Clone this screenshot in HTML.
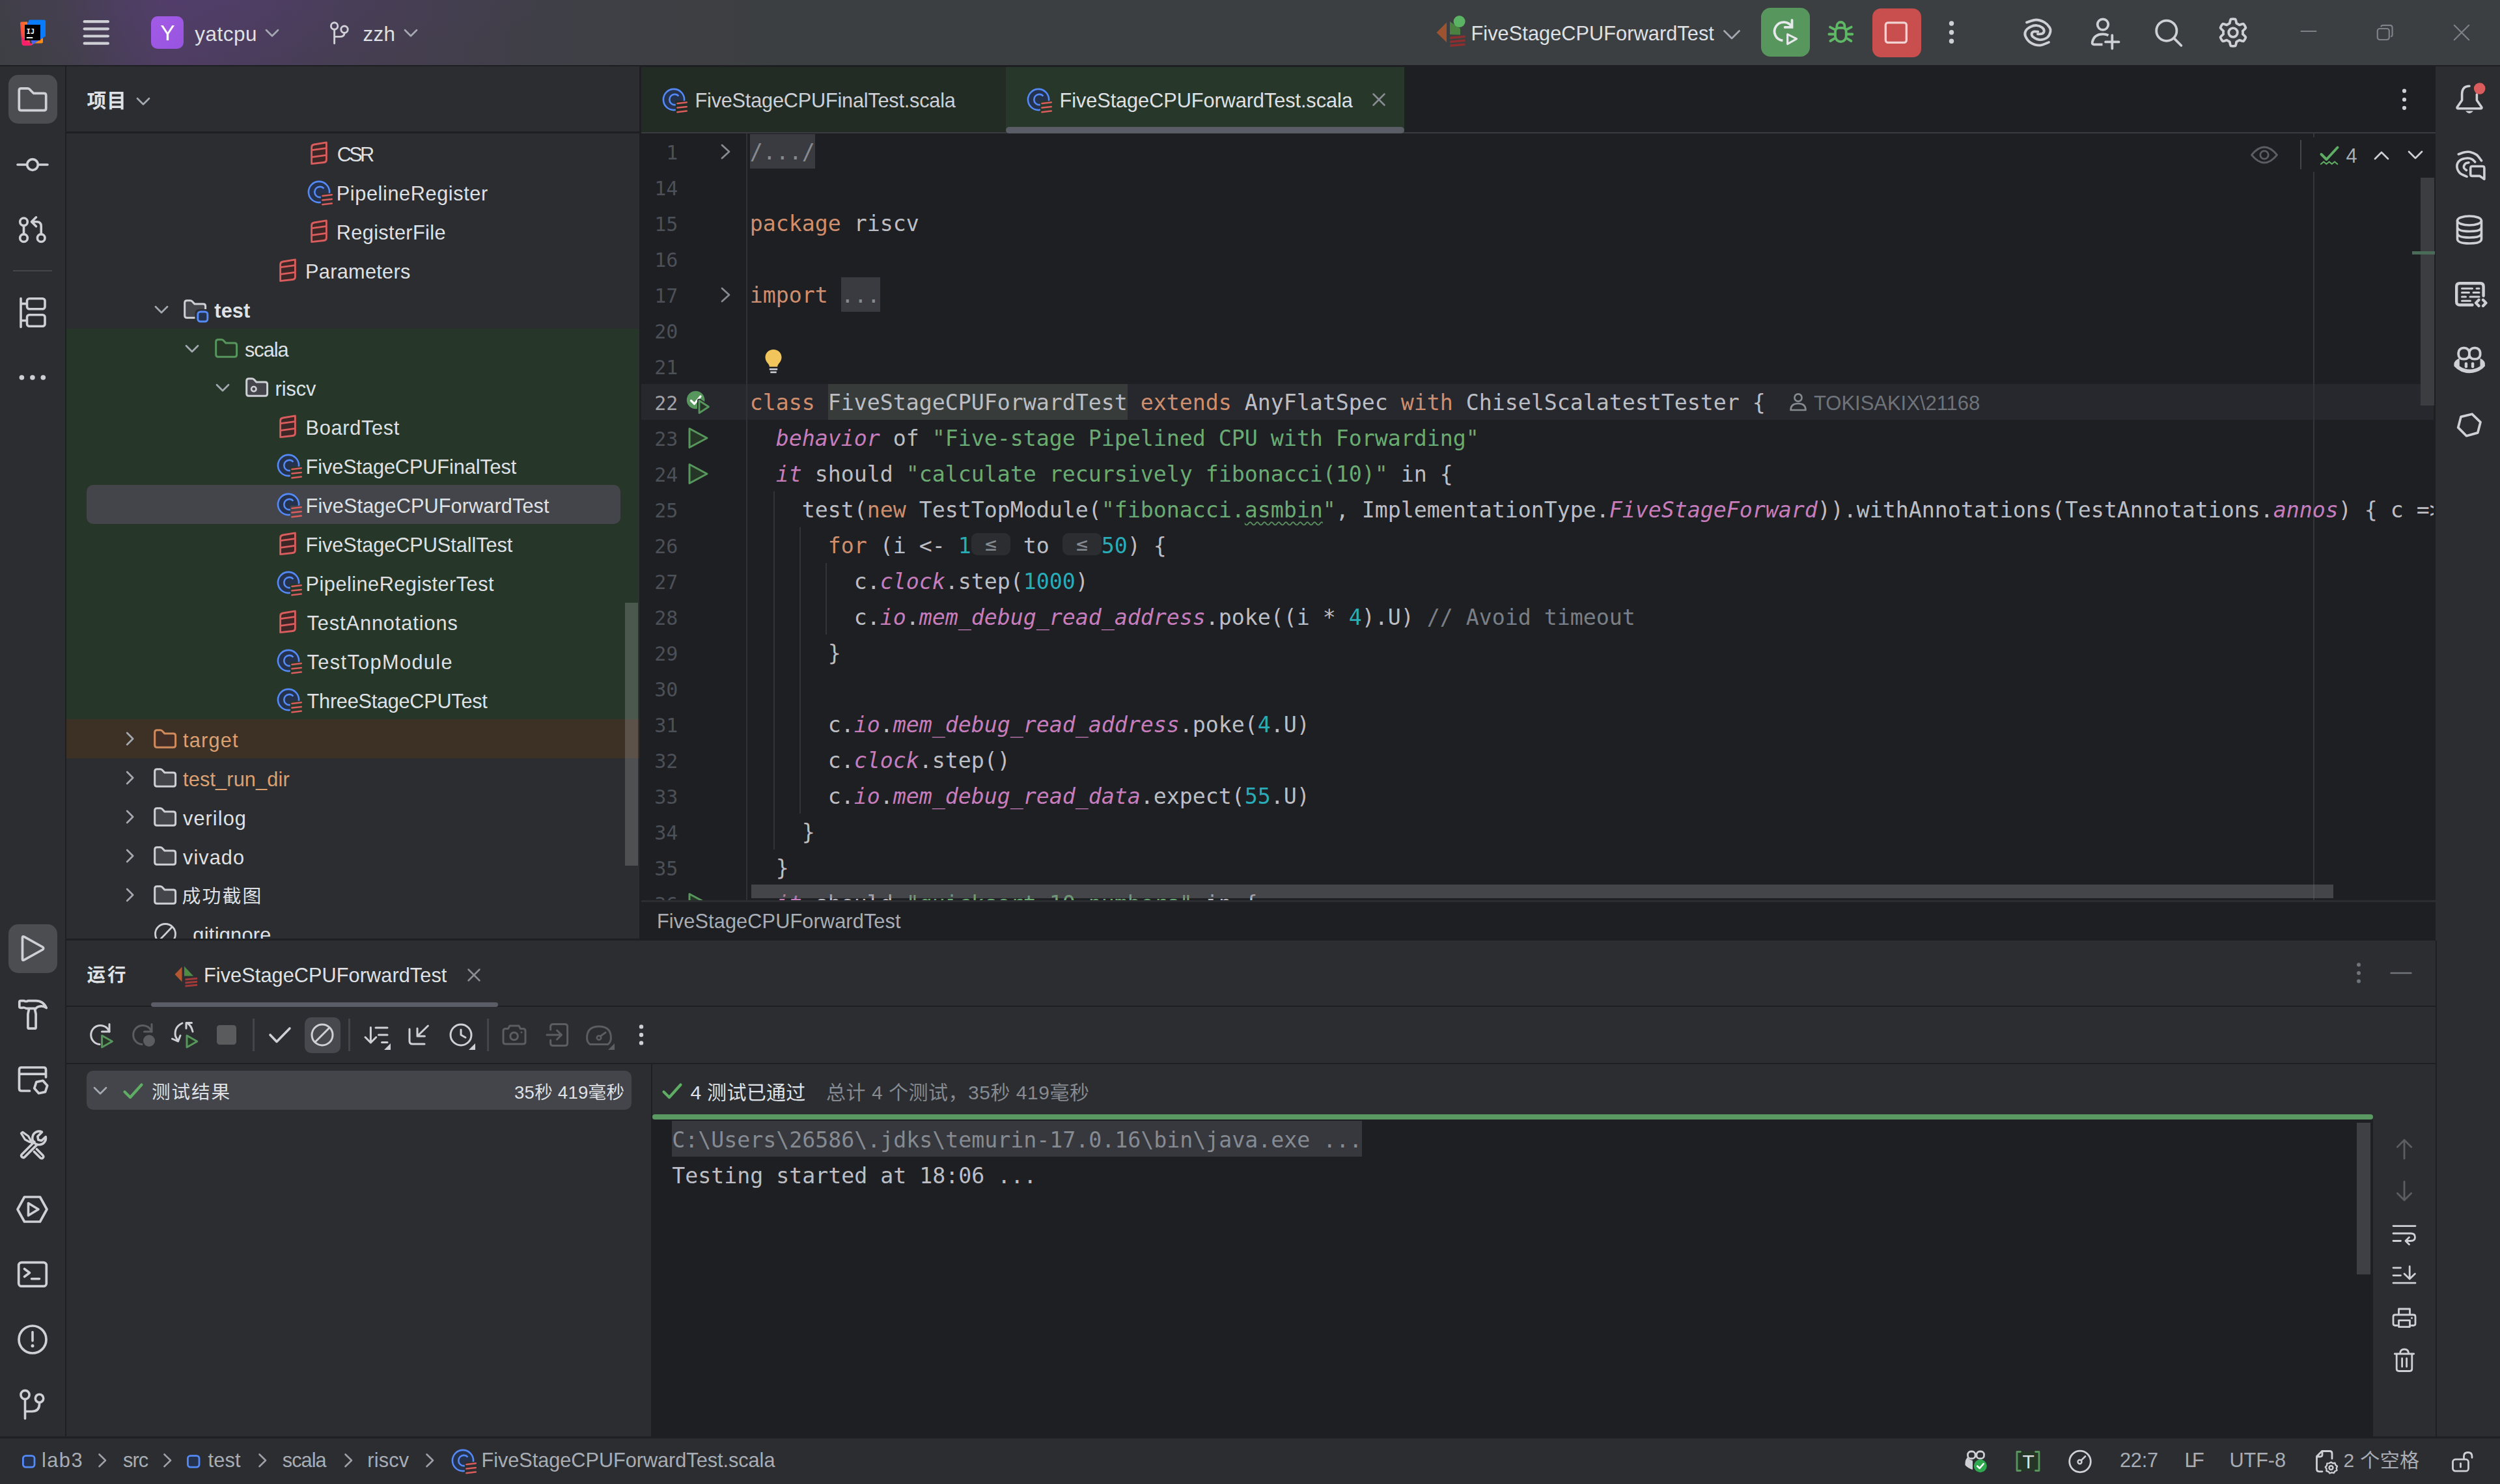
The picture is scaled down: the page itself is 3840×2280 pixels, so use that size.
<!DOCTYPE html>
<html lang="zh-CN"><head><meta charset="utf-8"><title>yatcpu – FiveStageCPUForwardTest.scala</title>
<style>
html,body{margin:0;padding:0;background:#2B2D30;overflow:hidden}
body{width:3840px;height:2280px;position:relative;font-family:"Liberation Sans","Noto Sans CJK SC",sans-serif;color:#DFE1E5}
.a{position:absolute;display:block}
.t{position:absolute;white-space:pre;line-height:1;display:block}
.p{display:inline-block;width:0;height:0}
.cl{position:absolute;white-space:pre;left:1153px;height:55px;line-height:55px;font-family:"DejaVu Sans Mono","Liberation Mono","Noto Sans CJK SC",monospace;font-size:33.22px;color:#BCBEC4}
.k{color:#CF8E6D}.s{color:#6AAB73}.n{color:#2AACB8}.c{color:#7A7E85}.f{color:#C77DBB;font-style:italic}
.fold{background:#393B40;color:#868A91}
.idh{background:#373B39}
.typo{text-decoration:underline wavy #5A8E5F 2px;text-underline-offset:6px}
.hint{display:inline-block;width:60px;height:34px;line-height:34px;vertical-align:3.6px;text-align:center;background:#2B2D30;border-radius:9px;color:#868A91;font-size:30px;letter-spacing:0}
.c2{color:#868A91}
.ln{position:absolute;white-space:pre;left:0;width:56.3px;text-align:right;height:55px;line-height:55px;margin-top:1.1px;font-family:"DejaVu Sans Mono","Liberation Mono",monospace;font-size:30px;color:#4B5059}
</style></head>
<body>
<main id="ide-window">
<section id="window-frame" aria-label="panels"><div class="a" id="titlebar" style="left:0;top:0;width:3840px;height:100px;background:radial-gradient(ellipse 560px 95px at 330px 0px,rgba(100,64,146,0.16) 0%,rgba(100,64,146,0.06) 60%,rgba(100,64,146,0) 100%),linear-gradient(90deg,#3E3F44 0px,#423F4A 100px,#4A3E5B 190px,#4F3D63 260px,#4D3D60 330px,#4A3D5B 410px,#463E53 520px,#443E4E 640px,#403F48 800px,#3E3F44 1000px,#3C3F41 1200px);"></div><div class="a" style="left:0px;top:100px;width:3840px;height:3px;background:#1E1F22;"></div><div class="a" style="left:0px;top:102px;width:100px;height:2105px;background:#2B2D30;"></div><div class="a" style="left:100px;top:102px;width:2px;height:2105px;background:#1E1F22;"></div><div class="a" style="left:102px;top:102px;width:880px;height:1340px;background:#2B2D30;"></div><div class="a" style="left:102px;top:202px;width:880px;height:3px;background:#1E1F22;"></div><div class="a" style="left:102px;top:505px;width:880px;height:600px;background:#263729;"></div><div class="a" style="left:102px;top:1105px;width:880px;height:60px;background:#3D3025;"></div><div class="a" style="left:133px;top:745px;width:820px;height:60px;background:#43454A;border-radius:10px;"></div><div class="a" style="left:960px;top:926px;width:20px;height:404px;background:rgba(255,255,255,0.17);"></div><div class="a" style="left:982px;top:102px;width:3px;height:1343px;background:#1E1F22;"></div><div class="a" style="left:985px;top:102px;width:2756px;height:1340px;background:#1E1F22;"></div><div class="a" style="left:985px;top:103px;width:560px;height:100px;background:#222C25;"></div><div class="a" style="left:1545px;top:103px;width:612px;height:100px;background:#27372A;"></div><div class="a" style="left:985px;top:203px;width:2756px;height:2px;background:#393B40;"></div><div class="a" style="left:1545px;top:195px;width:612px;height:10px;background:#5A5D65;border-radius:5px"></div><div class="a" style="left:3741px;top:102px;width:99px;height:2105px;background:#2B2D30;"></div><div class="a" style="left:102px;top:1442px;width:3639px;height:3px;background:#1E1F22;"></div><div class="a" style="left:102px;top:1445px;width:3639px;height:762px;background:#2B2D30;"></div><div class="a" style="left:3741px;top:1445px;width:2.4px;height:762px;background:#1E1F22;"></div><div class="a" style="left:102px;top:1545px;width:3639px;height:2px;background:#1E1F22;"></div><div class="a" style="left:102px;top:1633px;width:3639px;height:2px;background:#1E1F22;"></div><div class="a" style="left:232px;top:1540px;width:533px;height:7px;background:#5A5D65;border-radius:4px"></div><div class="a" style="left:133px;top:1645px;width:837px;height:60px;background:#43454A;border-radius:10px;"></div><div class="a" style="left:1000px;top:1635px;width:2px;height:572px;background:#1E1F22;"></div><div class="a" style="left:1000px;top:1720px;width:2645px;height:487px;background:#1E1F22;"></div><div class="a" style="left:1002px;top:1712px;width:2643px;height:8.4px;background:#5A9A62;border-radius:4px"></div><div class="a" style="left:1032px;top:1722px;width:1060px;height:55px;background:#36383D;"></div><div class="a" style="left:3620px;top:1725px;width:21px;height:233px;background:#3E4043;"></div><div class="a" style="left:0px;top:2207px;width:3840px;height:3px;background:#1E1F22;"></div><div class="a" style="left:0px;top:2210px;width:3840px;height:70px;background:#2B2D30;"></div></section>
<section id="editor-pane"><div class="a" id="editor" style="left:985px;top:205px;width:2753px;height:1178px;overflow:hidden"><div class="a" style="left:0px;top:385px;width:2753px;height:55px;background:#26282E;"></div><div class="a" style="left:287px;top:385px;width:460px;height:55px;background:#373B39;"></div><div class="a" style="left:167px;top:1px;width:100px;height:53px;background:#393B40;"></div><div class="a" style="left:307px;top:221px;width:60px;height:53px;background:#393B40;"></div><div class="a" style="left:160.5px;top:0px;width:2.5px;height:1178px;background:#2F3236;"></div><div class="a" style="left:2567.5px;top:0px;width:2.5px;height:1178px;background:#333539;"></div><div class="a" style="left:202.5px;top:550px;width:2.2px;height:550px;background:#313438;"></div><div class="a" style="left:242.5px;top:605px;width:2.2px;height:440px;background:#313438;"></div><div class="a" style="left:282.5px;top:660px;width:2.2px;height:110px;background:#313438;"></div><div class="ln" style="top:0.5px;color:#4B5059">1</div><div class="cl" style="left:166.79999999999995px;top:0.5px"><span class="c2">/.../</span></div><div class="ln" style="top:55.5px;color:#4B5059">14</div><div class="ln" style="top:110.5px;color:#4B5059">15</div><div class="cl" style="left:166.79999999999995px;top:110.5px"><span class="k">package</span> riscv</div><div class="ln" style="top:165.5px;color:#4B5059">16</div><div class="ln" style="top:220.5px;color:#4B5059">17</div><div class="cl" style="left:166.79999999999995px;top:220.5px"><span class="k">import</span> <span class="c2">...</span></div><div class="ln" style="top:275.5px;color:#4B5059">20</div><div class="ln" style="top:330.5px;color:#4B5059">21</div><div class="ln" style="top:385.5px;color:#A1A3AB">22</div><div class="cl" style="left:166.79999999999995px;top:385.5px"><span class="k">class</span> FiveStageCPUForwardTest <span class="k">extends</span> AnyFlatSpec <span class="k">with</span> ChiselScalatestTester {</div><div class="ln" style="top:440.5px;color:#4B5059">23</div><div class="cl" style="left:166.79999999999995px;top:440.5px">  <span class="f">behavior</span> of <span class="s">"Five-stage Pipelined CPU with Forwarding"</span></div><div class="ln" style="top:495.5px;color:#4B5059">24</div><div class="cl" style="left:166.79999999999995px;top:495.5px">  <span class="f">it</span> should <span class="s">"calculate recursively fibonacci(10)"</span> in {</div><div class="ln" style="top:550.5px;color:#4B5059">25</div><div class="cl" style="left:166.79999999999995px;top:550.5px">    test(<span class="k">new</span> TestTopModule(<span class="s">"fibonacci.<span class="typo">asmbin</span>"</span>, ImplementationType.<span class="f">FiveStageForward</span>)).withAnnotations(TestAnnotations.<span class="f">annos</span>) { c =&gt;</div><div class="ln" style="top:605.5px;color:#4B5059">26</div><div class="cl" style="left:166.79999999999995px;top:605.5px">      <span class="k">for</span> (i &lt;- <span class="n">1</span><span class="hint">≤</span> to <span class="hint">≤</span><span class="n">50</span>) {</div><div class="ln" style="top:660.5px;color:#4B5059">27</div><div class="cl" style="left:166.79999999999995px;top:660.5px">        c.<span class="f">clock</span>.step(<span class="n">1000</span>)</div><div class="ln" style="top:715.5px;color:#4B5059">28</div><div class="cl" style="left:166.79999999999995px;top:715.5px">        c.<span class="f">io</span>.<span class="f">mem_debug_read_address</span>.poke((i * <span class="n">4</span>).U) <span class="c">// Avoid timeout</span></div><div class="ln" style="top:770.5px;color:#4B5059">29</div><div class="cl" style="left:166.79999999999995px;top:770.5px">      }</div><div class="ln" style="top:825.5px;color:#4B5059">30</div><div class="ln" style="top:880.5px;color:#4B5059">31</div><div class="cl" style="left:166.79999999999995px;top:880.5px">      c.<span class="f">io</span>.<span class="f">mem_debug_read_address</span>.poke(<span class="n">4</span>.U)</div><div class="ln" style="top:935.5px;color:#4B5059">32</div><div class="cl" style="left:166.79999999999995px;top:935.5px">      c.<span class="f">clock</span>.step()</div><div class="ln" style="top:990.5px;color:#4B5059">33</div><div class="cl" style="left:166.79999999999995px;top:990.5px">      c.<span class="f">io</span>.<span class="f">mem_debug_read_data</span>.expect(<span class="n">55</span>.U)</div><div class="ln" style="top:1045.5px;color:#4B5059">34</div><div class="cl" style="left:166.79999999999995px;top:1045.5px">    }</div><div class="ln" style="top:1100.5px;color:#4B5059">35</div><div class="cl" style="left:166.79999999999995px;top:1100.5px">  }</div><div class="ln" style="top:1155.5px;color:#4B5059">36</div><div class="cl" style="left:166.79999999999995px;top:1155.5px">  <span class="f">it</span> should <span class="s">"quicksort 10 numbers"</span> in {</div><svg class="a" style="left:115px;top:12.5px" width="30" height="30" viewBox="0 0 30 30" fill="none"><path d="M9 5 L20 15 L9 25" stroke="#868A91" stroke-width="2.8" stroke-linecap="round" stroke-linejoin="round"/></svg><svg class="a" style="left:115px;top:232.5px" width="30" height="30" viewBox="0 0 30 30" fill="none"><path d="M9 5 L20 15 L9 25" stroke="#868A91" stroke-width="2.8" stroke-linecap="round" stroke-linejoin="round"/></svg><svg class="a" style="left:65px;top:447.5px" width="44" height="40" viewBox="0 0 44 40" fill="none"><path d="M9.0 5.5 L36.0 20 L9.0 34.5 Z" fill="#253627" stroke="#57965C" stroke-width="3.0" stroke-linejoin="round"/></svg><svg class="a" style="left:65px;top:502.5px" width="44" height="40" viewBox="0 0 44 40" fill="none"><path d="M9.0 5.5 L36.0 20 L9.0 34.5 Z" fill="#253627" stroke="#57965C" stroke-width="3.0" stroke-linejoin="round"/></svg><svg class="a" style="left:65px;top:1162.5px" width="44" height="40" viewBox="0 0 44 40" fill="none"><path d="M9.0 5.5 L36.0 20 L9.0 34.5 Z" fill="#253627" stroke="#57965C" stroke-width="3.0" stroke-linejoin="round"/></svg><svg class="a" style="left:65px;top:390.5px" width="46" height="46" viewBox="0 0 46 46" fill="none"><circle cx="18.6" cy="18.5" r="13.8" fill="#57965C"/><path d="M11.5 19.5 L16.5 24.5 L26 13" stroke="#fff" stroke-width="3.2" stroke-linecap="round" stroke-linejoin="round"/><path d="M24 19.5 L38.5 29 L24 38.5 Z" fill="#253627" stroke="#26282E" stroke-width="6" stroke-linejoin="round"/><path d="M24 19.5 L38.5 29 L24 38.5 Z" fill="#253627" stroke="#57965C" stroke-width="2.8" stroke-linejoin="round"/><path d="M24.5 21.5 L38 30 L24.5 38.5 Z" fill="none" stroke="#26282E" stroke-width="0"/></svg><svg class="a" style="left:187px;top:329px" width="32" height="42" viewBox="0 0 32 42" fill="none"><path d="M16 3 C8.8 3 3.5 8.3 3.5 15 C3.5 19.5 6 22.6 8 25 C9.2 26.5 9.8 28 9.8 29.5 L22.2 29.5 C22.2 28 22.8 26.5 24 25 C26 22.6 28.5 19.5 28.5 15 C28.5 8.3 23.2 3 16 3 Z" fill="#F2C55C"/><rect x="9.8" y="32" width="12.4" height="2.6" fill="#CED0D6"/><rect x="11.3" y="36.6" width="9.4" height="2.6" fill="#CED0D6"/></svg><div class="a" style="left:169px;top:1154px;width:2430px;height:21px;background:rgba(120,122,128,0.42);"></div></div><svg class="a" style="left:2746px;top:601px;" width="32" height="32" viewBox="0 0 32 32" fill="none"><circle cx="16" cy="10" r="5.6" stroke="#868A91" stroke-width="2.6"/><path d="M4.5 29 C4.5 21.5 9.5 19 16 19 C22.5 19 27.5 21.5 27.5 29 Z" stroke="#868A91" stroke-width="2.6" stroke-linejoin="round"/></svg><span class="t" style="left:2786px;top:603.5px;font-family:'Liberation Sans','Noto Sans CJK SC',sans-serif;font-size:31px;color:#6F737A;letter-spacing:-0.027px;">TOKISAKIX\21168</span><div class="a" style="left:985px;top:1383px;width:2756px;height:2.5px;background:#2B2D30;"></div><span class="t" style="left:1009px;top:1400.5px;font-family:'Liberation Sans','Noto Sans CJK SC',sans-serif;font-size:30.7px;color:#A8ADB5;letter-spacing:0.125px;">FiveStageCPUForwardTest</span><div class="a" style="left:3717.5px;top:273px;width:21px;height:350px;background:#3B3D40;"></div><div class="a" style="left:3705px;top:386px;width:35px;height:5px;background:#4A6B57;"></div></section>
<section id="project-tool-window"><svg class="a" style="left:476.5px;top:217.3px;" width="28" height="37" viewBox="0 0 28 37" fill="none"><path d="M1.6 9.4 Q1.6 5.6 5.4 5 L24.4 1.8 L24.4 28.4 Q24.4 32 20.6 32.5 L1.6 34.6 Z" fill="#3D2626" stroke="#DB5C5C" stroke-width="2.8" stroke-linejoin="round"/><path d="M2 13.6 L24 10.6 M2 24.4 L24 21.4" stroke="#DB5C5C" stroke-width="2.8"/></svg><span class="t" style="left:517.8px;top:223px;font-family:'Liberation Sans','Noto Sans CJK SC',sans-serif;font-size:30.7px;color:#DFE1E5;letter-spacing:-3.715px;">CSR</span><svg class="a" style="left:470.2px;top:275px;" width="44" height="44" viewBox="0 0 44 44" fill="none"><circle cx="20" cy="20" r="16.1" fill="#25324D" stroke="#548AF7" stroke-width="2.6"/><path d="M27.4 14.6 A8.1 8.1 0 1 0 27.4 25.4" stroke="#548AF7" stroke-width="2.6" fill="none"/><rect x="22.8" y="21.8" width="19.6" height="19.6" fill="#2B2D30"/><path d="M25.3 25.9 L39.8 24.2 M25.3 32.6 L39.8 30.9 M25.3 39.3 L39.8 37.6" stroke="#DB5C5C" stroke-width="2.5" stroke-linecap="round"/></svg><span class="t" style="left:516.8px;top:283px;font-family:'Liberation Sans','Noto Sans CJK SC',sans-serif;font-size:30.7px;color:#DFE1E5;letter-spacing:0.597px;">PipelineRegister</span><svg class="a" style="left:476.5px;top:337.3px;" width="28" height="37" viewBox="0 0 28 37" fill="none"><path d="M1.6 9.4 Q1.6 5.6 5.4 5 L24.4 1.8 L24.4 28.4 Q24.4 32 20.6 32.5 L1.6 34.6 Z" fill="#3D2626" stroke="#DB5C5C" stroke-width="2.8" stroke-linejoin="round"/><path d="M2 13.6 L24 10.6 M2 24.4 L24 21.4" stroke="#DB5C5C" stroke-width="2.8"/></svg><span class="t" style="left:516.8px;top:343px;font-family:'Liberation Sans','Noto Sans CJK SC',sans-serif;font-size:30.7px;color:#DFE1E5;letter-spacing:0.359px;">RegisterFile</span><svg class="a" style="left:429px;top:397.3px;" width="28" height="37" viewBox="0 0 28 37" fill="none"><path d="M1.6 9.4 Q1.6 5.6 5.4 5 L24.4 1.8 L24.4 28.4 Q24.4 32 20.6 32.5 L1.6 34.6 Z" fill="#3D2626" stroke="#DB5C5C" stroke-width="2.8" stroke-linejoin="round"/><path d="M2 13.6 L24 10.6 M2 24.4 L24 21.4" stroke="#DB5C5C" stroke-width="2.8"/></svg><span class="t" style="left:469px;top:403px;font-family:'Liberation Sans','Noto Sans CJK SC',sans-serif;font-size:30.7px;color:#DFE1E5;letter-spacing:0.304px;">Parameters</span><svg class="a" style="left:236.3px;top:467.7px;" width="24" height="16" viewBox="0 0 24 16" fill="none"><path d="M3 3.2 L12 12.2 L21 3.2" stroke="#A4A8B0" stroke-width="2.7" stroke-linecap="round" stroke-linejoin="round"/></svg><svg class="a" style="left:282px;top:460px;" width="44" height="42" viewBox="0 0 44 42" fill="none"><path d="M1.7 5 Q1.7 1.7 5 1.7 L10.3 1.7 Q11.8 1.7 12.9 2.8 L17 7.1 L30.3 7.1 Q33.6 7.1 33.6 10.4 L33.6 25 Q33.6 28.3 30.3 28.3 L5 28.3 Q1.7 28.3 1.7 25 Z" fill="#43454A" stroke="#CED0D6" stroke-width="3" stroke-linejoin="round"/><rect x="17.5" y="15" width="24" height="24" rx="6" fill="#2B2D30"/><rect x="21.8" y="19" width="15" height="15" rx="4" fill="#25324D" stroke="#548AF7" stroke-width="3"/></svg><span class="t" style="left:329.3px;top:463px;font-family:'Liberation Sans','Noto Sans CJK SC',sans-serif;font-size:30.7px;color:#DFE1E5;font-weight:bold;letter-spacing:0.116px;">test</span><svg class="a" style="left:283px;top:527.7px;" width="24" height="16" viewBox="0 0 24 16" fill="none"><path d="M3 3.2 L12 12.2 L21 3.2" stroke="#A4A8B0" stroke-width="2.7" stroke-linecap="round" stroke-linejoin="round"/></svg><svg class="a" style="left:330.4px;top:520px;" width="44" height="42" viewBox="0 0 44 42" fill="none"><path d="M1.7 5 Q1.7 1.7 5 1.7 L10.3 1.7 Q11.8 1.7 12.9 2.8 L17 7.1 L30.3 7.1 Q33.6 7.1 33.6 10.4 L33.6 25 Q33.6 28.3 30.3 28.3 L5 28.3 Q1.7 28.3 1.7 25 Z" fill="#253627" stroke="#57965C" stroke-width="3" stroke-linejoin="round"/></svg><span class="t" style="left:376px;top:523px;font-family:'Liberation Sans','Noto Sans CJK SC',sans-serif;font-size:30.7px;color:#DFE1E5;letter-spacing:-1.018px;">scala</span><svg class="a" style="left:329.6px;top:587.7px;" width="24" height="16" viewBox="0 0 24 16" fill="none"><path d="M3 3.2 L12 12.2 L21 3.2" stroke="#A4A8B0" stroke-width="2.7" stroke-linecap="round" stroke-linejoin="round"/></svg><svg class="a" style="left:377px;top:580px;" width="44" height="42" viewBox="0 0 44 42" fill="none"><path d="M1.7 5 Q1.7 1.7 5 1.7 L10.3 1.7 Q11.8 1.7 12.9 2.8 L17 7.1 L30.3 7.1 Q33.6 7.1 33.6 10.4 L33.6 25 Q33.6 28.3 30.3 28.3 L5 28.3 Q1.7 28.3 1.7 25 Z" fill="#43454A" stroke="#CED0D6" stroke-width="3" stroke-linejoin="round"/><circle cx="12.8" cy="17.7" r="3.7" stroke="#CED0D6" stroke-width="2.6" fill="none"/></svg><span class="t" style="left:422.5px;top:583px;font-family:'Liberation Sans','Noto Sans CJK SC',sans-serif;font-size:30.7px;color:#DFE1E5;letter-spacing:-0.056px;">riscv</span><svg class="a" style="left:429px;top:637.3px;" width="28" height="37" viewBox="0 0 28 37" fill="none"><path d="M1.6 9.4 Q1.6 5.6 5.4 5 L24.4 1.8 L24.4 28.4 Q24.4 32 20.6 32.5 L1.6 34.6 Z" fill="#3D2626" stroke="#DB5C5C" stroke-width="2.8" stroke-linejoin="round"/><path d="M2 13.6 L24 10.6 M2 24.4 L24 21.4" stroke="#DB5C5C" stroke-width="2.8"/></svg><span class="t" style="left:469.6px;top:643px;font-family:'Liberation Sans','Noto Sans CJK SC',sans-serif;font-size:30.7px;color:#DFE1E5;letter-spacing:0.695px;">BoardTest</span><svg class="a" style="left:422.9px;top:695px;" width="44" height="44" viewBox="0 0 44 44" fill="none"><circle cx="20" cy="20" r="16.1" fill="#25324D" stroke="#548AF7" stroke-width="2.6"/><path d="M27.4 14.6 A8.1 8.1 0 1 0 27.4 25.4" stroke="#548AF7" stroke-width="2.6" fill="none"/><rect x="22.8" y="21.8" width="19.6" height="19.6" fill="#263729"/><path d="M25.3 25.9 L39.8 24.2 M25.3 32.6 L39.8 30.9 M25.3 39.3 L39.8 37.6" stroke="#DB5C5C" stroke-width="2.5" stroke-linecap="round"/></svg><span class="t" style="left:469.6px;top:703px;font-family:'Liberation Sans','Noto Sans CJK SC',sans-serif;font-size:30.7px;color:#DFE1E5;letter-spacing:-0.101px;">FiveStageCPUFinalTest</span><svg class="a" style="left:422.9px;top:755px;" width="44" height="44" viewBox="0 0 44 44" fill="none"><circle cx="20" cy="20" r="16.1" fill="#25324D" stroke="#548AF7" stroke-width="2.6"/><path d="M27.4 14.6 A8.1 8.1 0 1 0 27.4 25.4" stroke="#548AF7" stroke-width="2.6" fill="none"/><rect x="22.8" y="21.8" width="19.6" height="19.6" fill="#43454A"/><path d="M25.3 25.9 L39.8 24.2 M25.3 32.6 L39.8 30.9 M25.3 39.3 L39.8 37.6" stroke="#DB5C5C" stroke-width="2.5" stroke-linecap="round"/></svg><span class="t" style="left:469.6px;top:763px;font-family:'Liberation Sans','Noto Sans CJK SC',sans-serif;font-size:30.7px;color:#DFE1E5;letter-spacing:0.097px;">FiveStageCPUForwardTest</span><svg class="a" style="left:429px;top:817.3px;" width="28" height="37" viewBox="0 0 28 37" fill="none"><path d="M1.6 9.4 Q1.6 5.6 5.4 5 L24.4 1.8 L24.4 28.4 Q24.4 32 20.6 32.5 L1.6 34.6 Z" fill="#3D2626" stroke="#DB5C5C" stroke-width="2.8" stroke-linejoin="round"/><path d="M2 13.6 L24 10.6 M2 24.4 L24 21.4" stroke="#DB5C5C" stroke-width="2.8"/></svg><span class="t" style="left:469.6px;top:823px;font-family:'Liberation Sans','Noto Sans CJK SC',sans-serif;font-size:30.7px;color:#DFE1E5;letter-spacing:-0.065px;">FiveStageCPUStallTest</span><svg class="a" style="left:422.9px;top:875px;" width="44" height="44" viewBox="0 0 44 44" fill="none"><circle cx="20" cy="20" r="16.1" fill="#25324D" stroke="#548AF7" stroke-width="2.6"/><path d="M27.4 14.6 A8.1 8.1 0 1 0 27.4 25.4" stroke="#548AF7" stroke-width="2.6" fill="none"/><rect x="22.8" y="21.8" width="19.6" height="19.6" fill="#263729"/><path d="M25.3 25.9 L39.8 24.2 M25.3 32.6 L39.8 30.9 M25.3 39.3 L39.8 37.6" stroke="#DB5C5C" stroke-width="2.5" stroke-linecap="round"/></svg><span class="t" style="left:469.6px;top:883px;font-family:'Liberation Sans','Noto Sans CJK SC',sans-serif;font-size:30.7px;color:#DFE1E5;letter-spacing:0.484px;">PipelineRegisterTest</span><svg class="a" style="left:429px;top:937.3px;" width="28" height="37" viewBox="0 0 28 37" fill="none"><path d="M1.6 9.4 Q1.6 5.6 5.4 5 L24.4 1.8 L24.4 28.4 Q24.4 32 20.6 32.5 L1.6 34.6 Z" fill="#3D2626" stroke="#DB5C5C" stroke-width="2.8" stroke-linejoin="round"/><path d="M2 13.6 L24 10.6 M2 24.4 L24 21.4" stroke="#DB5C5C" stroke-width="2.8"/></svg><span class="t" style="left:471.6px;top:943px;font-family:'Liberation Sans','Noto Sans CJK SC',sans-serif;font-size:30.7px;color:#DFE1E5;letter-spacing:0.913px;">TestAnnotations</span><svg class="a" style="left:422.9px;top:995px;" width="44" height="44" viewBox="0 0 44 44" fill="none"><circle cx="20" cy="20" r="16.1" fill="#25324D" stroke="#548AF7" stroke-width="2.6"/><path d="M27.4 14.6 A8.1 8.1 0 1 0 27.4 25.4" stroke="#548AF7" stroke-width="2.6" fill="none"/><rect x="22.8" y="21.8" width="19.6" height="19.6" fill="#263729"/><path d="M25.3 25.9 L39.8 24.2 M25.3 32.6 L39.8 30.9 M25.3 39.3 L39.8 37.6" stroke="#DB5C5C" stroke-width="2.5" stroke-linecap="round"/></svg><span class="t" style="left:471.6px;top:1003px;font-family:'Liberation Sans','Noto Sans CJK SC',sans-serif;font-size:30.7px;color:#DFE1E5;letter-spacing:1.380px;">TestTopModule</span><svg class="a" style="left:422.9px;top:1055px;" width="44" height="44" viewBox="0 0 44 44" fill="none"><circle cx="20" cy="20" r="16.1" fill="#25324D" stroke="#548AF7" stroke-width="2.6"/><path d="M27.4 14.6 A8.1 8.1 0 1 0 27.4 25.4" stroke="#548AF7" stroke-width="2.6" fill="none"/><rect x="22.8" y="21.8" width="19.6" height="19.6" fill="#263729"/><path d="M25.3 25.9 L39.8 24.2 M25.3 32.6 L39.8 30.9 M25.3 39.3 L39.8 37.6" stroke="#DB5C5C" stroke-width="2.5" stroke-linecap="round"/></svg><span class="t" style="left:471.6px;top:1063px;font-family:'Liberation Sans','Noto Sans CJK SC',sans-serif;font-size:30.7px;color:#DFE1E5;letter-spacing:-0.263px;">ThreeStageCPUTest</span><svg class="a" style="left:192px;top:1123.3px;" width="16" height="24" viewBox="0 0 16 24" fill="none"><path d="M3.2 3 L12.2 12 L3.2 21" stroke="#A4A8B0" stroke-width="2.7" stroke-linecap="round" stroke-linejoin="round"/></svg><svg class="a" style="left:235.5px;top:1120px;" width="44" height="42" viewBox="0 0 44 42" fill="none"><path d="M1.7 5 Q1.7 1.7 5 1.7 L10.3 1.7 Q11.8 1.7 12.9 2.8 L17 7.1 L30.3 7.1 Q33.6 7.1 33.6 10.4 L33.6 25 Q33.6 28.3 30.3 28.3 L5 28.3 Q1.7 28.3 1.7 25 Z" fill="#432E27" stroke="#D08A5C" stroke-width="3" stroke-linejoin="round"/></svg><span class="t" style="left:281px;top:1123px;font-family:'Liberation Sans','Noto Sans CJK SC',sans-serif;font-size:30.7px;color:#DDA071;letter-spacing:1.211px;">target</span><svg class="a" style="left:192px;top:1183.3px;" width="16" height="24" viewBox="0 0 16 24" fill="none"><path d="M3.2 3 L12.2 12 L3.2 21" stroke="#A4A8B0" stroke-width="2.7" stroke-linecap="round" stroke-linejoin="round"/></svg><svg class="a" style="left:235.5px;top:1180px;" width="44" height="42" viewBox="0 0 44 42" fill="none"><path d="M1.7 5 Q1.7 1.7 5 1.7 L10.3 1.7 Q11.8 1.7 12.9 2.8 L17 7.1 L30.3 7.1 Q33.6 7.1 33.6 10.4 L33.6 25 Q33.6 28.3 30.3 28.3 L5 28.3 Q1.7 28.3 1.7 25 Z" fill="#43454A" stroke="#CED0D6" stroke-width="3" stroke-linejoin="round"/></svg><span class="t" style="left:281px;top:1183px;font-family:'Liberation Sans','Noto Sans CJK SC',sans-serif;font-size:30.7px;color:#DDA071;letter-spacing:0.151px;">test_run_dir</span><svg class="a" style="left:192px;top:1243.3px;" width="16" height="24" viewBox="0 0 16 24" fill="none"><path d="M3.2 3 L12.2 12 L3.2 21" stroke="#A4A8B0" stroke-width="2.7" stroke-linecap="round" stroke-linejoin="round"/></svg><svg class="a" style="left:235.5px;top:1240px;" width="44" height="42" viewBox="0 0 44 42" fill="none"><path d="M1.7 5 Q1.7 1.7 5 1.7 L10.3 1.7 Q11.8 1.7 12.9 2.8 L17 7.1 L30.3 7.1 Q33.6 7.1 33.6 10.4 L33.6 25 Q33.6 28.3 30.3 28.3 L5 28.3 Q1.7 28.3 1.7 25 Z" fill="#43454A" stroke="#CED0D6" stroke-width="3" stroke-linejoin="round"/></svg><span class="t" style="left:281px;top:1243px;font-family:'Liberation Sans','Noto Sans CJK SC',sans-serif;font-size:30.7px;color:#DFE1E5;letter-spacing:1.078px;">verilog</span><svg class="a" style="left:192px;top:1303.3px;" width="16" height="24" viewBox="0 0 16 24" fill="none"><path d="M3.2 3 L12.2 12 L3.2 21" stroke="#A4A8B0" stroke-width="2.7" stroke-linecap="round" stroke-linejoin="round"/></svg><svg class="a" style="left:235.5px;top:1300px;" width="44" height="42" viewBox="0 0 44 42" fill="none"><path d="M1.7 5 Q1.7 1.7 5 1.7 L10.3 1.7 Q11.8 1.7 12.9 2.8 L17 7.1 L30.3 7.1 Q33.6 7.1 33.6 10.4 L33.6 25 Q33.6 28.3 30.3 28.3 L5 28.3 Q1.7 28.3 1.7 25 Z" fill="#43454A" stroke="#CED0D6" stroke-width="3" stroke-linejoin="round"/></svg><span class="t" style="left:281px;top:1303px;font-family:'Liberation Sans','Noto Sans CJK SC',sans-serif;font-size:30.7px;color:#DFE1E5;letter-spacing:1.072px;">vivado</span><svg class="a" style="left:192px;top:1363.3px;" width="16" height="24" viewBox="0 0 16 24" fill="none"><path d="M3.2 3 L12.2 12 L3.2 21" stroke="#A4A8B0" stroke-width="2.7" stroke-linecap="round" stroke-linejoin="round"/></svg><svg class="a" style="left:235.5px;top:1360px;" width="44" height="42" viewBox="0 0 44 42" fill="none"><path d="M1.7 5 Q1.7 1.7 5 1.7 L10.3 1.7 Q11.8 1.7 12.9 2.8 L17 7.1 L30.3 7.1 Q33.6 7.1 33.6 10.4 L33.6 25 Q33.6 28.3 30.3 28.3 L5 28.3 Q1.7 28.3 1.7 25 Z" fill="#43454A" stroke="#CED0D6" stroke-width="3" stroke-linejoin="round"/></svg><span class="t" style="left:279.5px;top:1363.3px;font-family:'Liberation Sans','Noto Sans CJK SC',sans-serif;font-size:28.8px;color:#DFE1E5;letter-spacing:2.203px;">成功截图</span><div class="a" style="left:103px;top:1405px;width:879px;height:37px;overflow:hidden"><svg class="a" style="left:132.5px;top:10px" width="40" height="40" viewBox="0 0 40 40" fill="none"><circle cx="18" cy="20" r="15.5" stroke="#CED0D6" stroke-width="2.8"/><path d="M7.5 31 L28.5 9" stroke="#CED0D6" stroke-width="2.8"/></svg><span class="t" style="left:184.5px;top:17px;font-size:30.7px;letter-spacing:0.3px">.gitignore</span></div><span class="t" style="left:133.4px;top:140.4px;font-family:'Liberation Sans','Noto Sans CJK SC',sans-serif;font-size:29.8px;color:#DFE1E5;font-weight:bold;letter-spacing:0.803px;">项目</span><svg class="a" style="left:208px;top:148px;" width="24" height="16" viewBox="0 0 24 16" fill="none"><path d="M3 3.2 L12 12.2 L21 3.2" stroke="#A4A8B0" stroke-width="2.7" stroke-linecap="round" stroke-linejoin="round"/></svg></section>
<section id="toolbars-and-labels"><svg class="a" style="left:28px;top:28px;" width="44" height="44" viewBox="0 0 44 44" fill="none"><defs><linearGradient id="lg1" x1="0" y1="1" x2="1" y2="0"><stop offset="0" stop-color="#FC1F6A"/><stop offset="0.5" stop-color="#FB5A3A"/><stop offset="1" stop-color="#FD8A17"/></linearGradient><linearGradient id="lg2" x1="0" y1="1" x2="1" y2="0"><stop offset="0" stop-color="#7C52E8"/><stop offset="0.6" stop-color="#087CFA"/><stop offset="1" stop-color="#087CFA"/></linearGradient></defs><path d="M3 8 Q3 5.5 5.5 5.5 L14 5.5 L18 40 Q6 42 5.5 40 Z" fill="url(#lg1)"/><path d="M5.5 40.5 L19 42 L38 30 L38 36 Q38 38.5 35.5 38.5 L26 38.5 Z" fill="#FD8A17"/><path d="M5 28 L19 42 L10 42.3 Q6.5 42.3 6 39 Z" fill="#FC1F6A"/><path d="M17 2.5 L39.5 2.5 Q42 2.5 42 5 L42 27.5 L22 40.5 L12 12 Z" fill="url(#lg2)"/><path d="M6 30 L22 40.5 L19.5 42 L7 42 Z" fill="#FC1F6A"/><rect x="10" y="10" width="24" height="24" fill="#000"/><rect x="12.8" y="29" width="9.5" height="1.9" fill="#fff"/></svg><span class="t" style="left:40.4px;top:43.3px;font-family:'DejaVu Sans Mono','Liberation Mono','Noto Sans CJK SC',monospace;font-size:10.5px;color:#FFFFFF;font-weight:bold;">IJ</span><svg class="a" style="left:126px;top:28px;" width="44" height="44" viewBox="0 0 44 44" fill="none"><rect x="1.6" y="3.1000000000000028" width="40.4" height="4.2" rx="2.1" fill="#CED0D6"/><rect x="1.6" y="14.199999999999998" width="40.4" height="4.2" rx="2.1" fill="#CED0D6"/><rect x="1.6" y="25.4" width="40.4" height="4.2" rx="2.1" fill="#CED0D6"/><rect x="1.6" y="36.6" width="40.4" height="4.2" rx="2.1" fill="#CED0D6"/></svg><div class="a" style="left:232px;top:25px;width:50px;height:50px;border-radius:10px;background:linear-gradient(135deg,#A35BE6,#9754E0)"></div><span class="t" style="left:246.3px;top:34.4px;font-family:'Liberation Sans','Noto Sans CJK SC',sans-serif;font-size:33.5px;color:#FFFFFF;">Y</span><span class="t" style="left:299.3px;top:36.5px;font-family:'Liberation Sans','Noto Sans CJK SC',sans-serif;font-size:31.4px;color:#DFE1E5;letter-spacing:0.534px;">yatcpu</span><svg class="a" style="left:406px;top:42.8px;" width="24" height="16" viewBox="0 0 24 16" fill="none"><path d="M3 3.2 L12 12.2 L21 3.2" stroke="#A4A8B0" stroke-width="2.7" stroke-linecap="round" stroke-linejoin="round"/></svg><svg class="a" style="left:504px;top:30px;" width="36" height="42" viewBox="0 0 36 42" fill="none"><circle cx="9.6" cy="10" r="5.2" stroke="#CED0D6" stroke-width="2.9"/><circle cx="25" cy="15.2" r="5.2" stroke="#CED0D6" stroke-width="2.9"/><path d="M9.6 15.8 L9.6 36.8 M9.6 26.4 L18 26.4 Q25 26.4 25 21" stroke="#CED0D6" stroke-width="2.9" stroke-linecap="round" fill="none"/></svg><span class="t" style="left:557.5px;top:36.5px;font-family:'Liberation Sans','Noto Sans CJK SC',sans-serif;font-size:31.4px;color:#DFE1E5;letter-spacing:0.305px;">zzh</span><svg class="a" style="left:619px;top:42.8px;" width="24" height="16" viewBox="0 0 24 16" fill="none"><path d="M3 3.2 L12 12.2 L21 3.2" stroke="#A4A8B0" stroke-width="2.7" stroke-linecap="round" stroke-linejoin="round"/></svg><svg class="a" style="left:2204px;top:22px;" width="50" height="54" viewBox="0 0 50 54" fill="none"><path d="M2.6 28 L18 12.5 L18 43 Z" fill="#9E5330"/><path d="M23 11 L23 31 L39 31.5 L39 22 Z" fill="#4B8242"/><circle cx="37.6" cy="11" r="9" fill="#5BB463"/><path d="M23 34.5 L46.5 32.5 L46.5 36 L23 38 Z M23 40.5 L46.5 38.5 L46.5 42 L23 44 Z M23 46.5 L46.5 44.5 L46.5 48 L23 50 Z" fill="#8F2E2E"/></svg><span class="t" style="left:2259.5px;top:37.4px;font-family:'Liberation Sans','Noto Sans CJK SC',sans-serif;font-size:30.7px;color:#DFE1E5;letter-spacing:0.070px;">FiveStageCPUForwardTest</span><svg class="a" style="left:2646px;top:44.5px;" width="28" height="18" viewBox="0 0 28 18" fill="none"><path d="M2.5 2.5 L14 14 L25.5 2.5" stroke="#A4A8B0" stroke-width="2.8" stroke-linecap="round" stroke-linejoin="round"/></svg><div class="a" style="left:2705px;top:12.3px;width:75px;height:75.2px;background:#57965C;border-radius:14.5px;"></div><svg class="a" style="left:2715px;top:22px;" width="56" height="56" viewBox="0 0 56 56" fill="none"><path d="M37.5 19.9 A14.2 14.2 0 1 0 23.4 40.4" stroke="#E6E8EC" stroke-width="3.8" fill="none"/><path d="M37.5 9 L37.5 19.9 L26.6 19.9" stroke="#E6E8EC" stroke-width="3.8" stroke-linecap="round" stroke-linejoin="miter" fill="none"/><path d="M30.6 30.6 L44.6 37.6 L30.6 45.6 Z" stroke="#E6E8EC" stroke-width="3.1" stroke-linejoin="round" fill="#57965C"/></svg><svg class="a" style="left:2804px;top:27px;" width="46" height="44" viewBox="0 0 46 44" fill="none"><path d="M17.4 15.9 L17.4 13 A6 6 0 0 1 29.4 13 L29.4 15.9" stroke="#5FB865" stroke-width="3.8"/><path d="M15 21.4 Q15 15.9 20.5 15.9 L26.2 15.9 Q31.7 15.9 31.7 21.4 L31.7 28.7 A8.35 8.35 0 0 1 15 28.7 Z" stroke="#5FB865" stroke-width="3.8"/><path d="M7 14.6 L13.1 17.8 M39.7 14.6 L33.6 17.8 M5.4 25.5 L13.1 25.5 M41.3 25.5 L33.6 25.5 M7.4 36 L13.8 32.2 M39.4 36 L33 32.2" stroke="#5FB865" stroke-width="3.8" stroke-linecap="round"/></svg><div class="a" style="left:2875.5px;top:12.5px;width:75px;height:75px;background:#C94F4F;border-radius:13px;"></div><svg class="a" style="left:2890px;top:28px;" width="46" height="44" viewBox="0 0 46 44" fill="none"><rect x="6.3" y="6.8" width="32" height="30.5" rx="3.5" stroke="#F0D4D4" stroke-width="3.3"/></svg><svg class="a" style="left:2990px;top:28px;" width="16" height="44" viewBox="0 0 16 44" fill="none"><circle cx="7.5" cy="8" r="3.7" fill="#CED0D6"/><circle cx="7.5" cy="21.799999999999997" r="3.7" fill="#CED0D6"/><circle cx="7.5" cy="35.3" r="3.7" fill="#CED0D6"/></svg><svg class="a" style="left:3104px;top:26px;" width="52" height="50" viewBox="0 0 52 50" fill="none"><path d="M9.0 8.4 C11.4 7.8 18.8 4.5 23.4 4.5 C28.0 4.5 32.9 6.4 36.4 8.4 C39.9 10.4 42.8 14.0 44.3 16.4 C45.8 18.8 46.0 20.3 45.4 22.8 C44.8 25.3 43.4 29.4 40.7 31.5 C38.0 33.5 32.7 35.1 29.2 35.1 C25.7 35.1 21.9 33.0 19.8 31.5 C17.7 30.1 16.6 27.9 16.6 26.4 C16.6 24.9 18.2 23.1 19.8 22.5 C21.4 21.9 25.2 22.8 26.3 22.8 " stroke="#CED0D6" stroke-width="3.9" stroke-linecap="round" fill="none"/><path d="M42.9 39.0 C40.6 39.8 33.9 43.5 29.2 43.6 C24.5 43.7 18.5 41.8 14.8 39.4 C11.1 37.0 8.1 32.3 6.9 29.3 C5.7 26.3 6.3 23.7 7.6 21.4 C8.9 19.1 12.0 16.7 14.8 15.3 C17.6 13.9 21.2 12.9 24.2 13.1 C27.2 13.3 30.9 15.0 32.8 16.4 C34.7 17.8 35.7 19.8 35.7 21.4 C35.7 22.9 34.4 24.9 32.8 25.7 C31.2 26.5 27.1 26.3 26.0 26.4 " stroke="#CED0D6" stroke-width="3.9" stroke-linecap="round" fill="none"/></svg><svg class="a" style="left:3206px;top:24px;" width="54" height="54" viewBox="0 0 54 54" fill="none"><circle cx="24" cy="13.6" r="8.3" stroke="#CED0D6" stroke-width="3.8"/><path d="M32.5 30.2 Q28.5 28.3 24 28.3 Q10.5 28.3 7.8 40.5 Q7.2 44.3 10.5 44.3 L23.5 44.3" stroke="#CED0D6" stroke-width="3.8" stroke-linecap="butt" fill="none"/><path d="M38.3 30.2 L38.3 50.6 M28.1 40.4 L48.5 40.4" stroke="#CED0D6" stroke-width="3.8" stroke-linecap="round"/></svg><svg class="a" style="left:3306px;top:26px;" width="50" height="50" viewBox="0 0 50 50" fill="none"><circle cx="21.8" cy="21.2" r="15.6" stroke="#CED0D6" stroke-width="3.8"/><path d="M33.3 32.8 L44.4 44" stroke="#CED0D6" stroke-width="3.8" stroke-linecap="round"/></svg><svg class="a" style="left:3404.6px;top:25.2px;" width="50" height="50" viewBox="0 0 50 50" fill="none"><path d="M25.00 45.80 L24.09 45.78 L23.19 45.72 L22.29 45.62 L21.41 45.34 L20.82 43.87 L20.37 42.29 L20.05 40.71 L19.82 39.23 L19.26 38.86 L18.66 38.59 L18.07 38.31 L17.50 37.99 L16.94 37.65 L16.40 37.29 L15.87 36.90 L15.26 36.60 L13.87 37.15 L12.34 37.66 L10.75 38.06 L9.18 38.28 L8.50 37.66 L7.96 36.93 L7.46 36.18 L6.99 35.40 L6.55 34.60 L6.15 33.79 L5.78 32.96 L5.59 32.06 L6.57 30.81 L7.71 29.63 L8.92 28.57 L10.09 27.63 L10.13 26.96 L10.06 26.31 L10.01 25.65 L10.00 25.00 L10.01 24.35 L10.06 23.69 L10.13 23.04 L10.09 22.37 L8.92 21.43 L7.71 20.37 L6.57 19.19 L5.59 17.94 L5.78 17.04 L6.15 16.21 L6.55 15.40 L6.99 14.60 L7.46 13.82 L7.96 13.07 L8.50 12.34 L9.18 11.72 L10.75 11.94 L12.34 12.34 L13.87 12.85 L15.26 13.40 L15.87 13.10 L16.40 12.71 L16.94 12.35 L17.50 12.01 L18.07 11.69 L18.66 11.41 L19.26 11.14 L19.82 10.77 L20.05 9.29 L20.37 7.71 L20.82 6.13 L21.41 4.66 L22.29 4.38 L23.19 4.28 L24.09 4.22 L25.00 4.20 L25.91 4.22 L26.81 4.28 L27.71 4.38 L28.59 4.66 L29.18 6.13 L29.63 7.71 L29.95 9.29 L30.18 10.77 L30.74 11.14 L31.34 11.41 L31.93 11.69 L32.50 12.01 L33.06 12.35 L33.60 12.71 L34.13 13.10 L34.74 13.40 L36.13 12.85 L37.66 12.34 L39.25 11.94 L40.82 11.72 L41.50 12.34 L42.04 13.07 L42.54 13.82 L43.01 14.60 L43.45 15.40 L43.85 16.21 L44.22 17.04 L44.41 17.94 L43.43 19.19 L42.29 20.37 L41.08 21.43 L39.91 22.37 L39.87 23.04 L39.94 23.69 L39.99 24.35 L40.00 25.00 L39.99 25.65 L39.94 26.31 L39.87 26.96 L39.91 27.63 L41.08 28.57 L42.29 29.63 L43.43 30.81 L44.41 32.06 L44.22 32.96 L43.85 33.79 L43.45 34.60 L43.01 35.40 L42.54 36.18 L42.04 36.93 L41.50 37.66 L40.82 38.28 L39.25 38.06 L37.66 37.66 L36.13 37.15 L34.74 36.60 L34.13 36.90 L33.60 37.29 L33.06 37.65 L32.50 37.99 L31.93 38.31 L31.34 38.59 L30.74 38.86 L30.18 39.23 L29.95 40.71 L29.63 42.29 L29.18 43.87 L28.59 45.34 L27.71 45.62 L26.81 45.72 L25.91 45.78 L25.00 45.80 Z" stroke="#CED0D6" stroke-width="3.8" stroke-linejoin="round"/><circle cx="25" cy="25" r="6.8" stroke="#CED0D6" stroke-width="3.8"/></svg><svg class="a" style="left:3530px;top:40px;" width="32" height="16" viewBox="0 0 32 16" fill="none"><path d="M4.5 8 L27.5 8" stroke="#7E8188" stroke-width="2.2" stroke-linecap="round"/></svg><svg class="a" style="left:3646px;top:34px;" width="34" height="32" viewBox="0 0 34 32" fill="none"><rect x="5.8" y="10" width="18" height="17" rx="3.5" stroke="#7E8188" stroke-width="2.2"/><path d="M11.5 6.5 Q12 4.8 14.5 4.8 L25 4.8 Q28.6 4.8 28.6 8.4 L28.6 19 Q28.6 21.5 27 22" stroke="#7E8188" stroke-width="2.2" fill="none" stroke-linecap="round"/></svg><svg class="a" style="left:3764px;top:34px;" width="34" height="32" viewBox="0 0 34 32" fill="none"><path d="M5.8 4.8 L28.2 27.2 M28.2 4.8 L5.8 27.2" stroke="#7E8188" stroke-width="2.2" stroke-linecap="round"/></svg><svg class="a" style="left:1015.0999999999999px;top:132.9px;" width="44" height="44" viewBox="0 0 44 44" fill="none"><circle cx="20" cy="20" r="16.1" fill="#25324D" stroke="#548AF7" stroke-width="2.6"/><path d="M27.4 14.6 A8.1 8.1 0 1 0 27.4 25.4" stroke="#548AF7" stroke-width="2.6" fill="none"/><rect x="22.8" y="21.8" width="19.6" height="19.6" fill="#222C25"/><path d="M25.3 25.9 L39.8 24.2 M25.3 32.6 L39.8 30.9 M25.3 39.3 L39.8 37.6" stroke="#DB5C5C" stroke-width="2.5" stroke-linecap="round"/></svg><span class="t" style="left:1067.5px;top:140px;font-family:'Liberation Sans','Noto Sans CJK SC',sans-serif;font-size:30.7px;color:#CED0D6;letter-spacing:-0.214px;">FiveStageCPUFinalTest.scala</span><svg class="a" style="left:1574.6px;top:132.9px;" width="44" height="44" viewBox="0 0 44 44" fill="none"><circle cx="20" cy="20" r="16.1" fill="#25324D" stroke="#548AF7" stroke-width="2.6"/><path d="M27.4 14.6 A8.1 8.1 0 1 0 27.4 25.4" stroke="#548AF7" stroke-width="2.6" fill="none"/><rect x="22.8" y="21.8" width="19.6" height="19.6" fill="#27372A"/><path d="M25.3 25.9 L39.8 24.2 M25.3 32.6 L39.8 30.9 M25.3 39.3 L39.8 37.6" stroke="#DB5C5C" stroke-width="2.5" stroke-linecap="round"/></svg><span class="t" style="left:1627.5px;top:140px;font-family:'Liberation Sans','Noto Sans CJK SC',sans-serif;font-size:30.7px;color:#DFE1E5;letter-spacing:-0.060px;">FiveStageCPUForwardTest.scala</span><svg class="a" style="left:2104px;top:139px;" width="28" height="28" viewBox="0 0 28 28" fill="none"><path d="M5.5 5.5 L22.5 22.5 M22.5 5.5 L5.5 22.5" stroke="#8A8D94" stroke-width="2.5" stroke-linecap="round"/></svg><svg class="a" style="left:3685px;top:130px;" width="16" height="44" viewBox="0 0 16 44" fill="none"><circle cx="8" cy="9.7" r="3.1" fill="#CED0D6"/><circle cx="8" cy="23" r="3.1" fill="#CED0D6"/><circle cx="8" cy="35.8" r="3.1" fill="#CED0D6"/></svg><div class="a" style="left:3440px;top:211px;width:298px;height:53px;background:#1E1F22;"></div><svg class="a" style="left:3454px;top:218px;" width="48" height="40" viewBox="0 0 48 40" fill="none"><path d="M4.5 20 Q24 -4 43.5 20 Q24 44 4.5 20 Z" stroke="#5A5D63" stroke-width="2.8" stroke-linejoin="round"/><circle cx="24" cy="20" r="6.2" stroke="#5A5D63" stroke-width="2.8"/></svg><div class="a" style="left:3532.5px;top:215px;width:2.5px;height:45px;background:#43454A;"></div><svg class="a" style="left:3560px;top:220px;" width="38" height="40" viewBox="0 0 38 40" fill="none"><path d="M5.5 17 L13.5 25 L30.5 6.5" stroke="#5FAD65" stroke-width="4" stroke-linecap="round" stroke-linejoin="round"/><path d="M5 32 L9.2 28.5 L13.4 32 L17.6 28.5 L21.8 32 L26 28.5 L30.2 32" stroke="#5FAD65" stroke-width="2.2" stroke-linejoin="round" stroke-linecap="round"/></svg><span class="t" style="left:3603.5px;top:225px;font-family:'Liberation Sans','Noto Sans CJK SC',sans-serif;font-size:30.7px;color:#A8ADB5;">4</span><svg class="a" style="left:3643px;top:226px;" width="30" height="24" viewBox="0 0 30 24" fill="none"><path d="M5 18 L15 8 L25 18" stroke="#CED0D6" stroke-width="2.7" stroke-linecap="round" stroke-linejoin="round"/></svg><svg class="a" style="left:3694.5px;top:226px;" width="30" height="24" viewBox="0 0 30 24" fill="none"><path d="M5 7 L15 17 L25 7" stroke="#CED0D6" stroke-width="2.7" stroke-linecap="round" stroke-linejoin="round"/></svg><span class="t" style="left:133.5px;top:1484.3px;font-family:'Liberation Sans','Noto Sans CJK SC',sans-serif;font-size:28.5px;color:#DFE1E5;font-weight:bold;letter-spacing:3.000px;">运行</span><svg class="a" style="left:266px;top:1480px;" width="40" height="38" viewBox="0 0 40 38" fill="none"><path d="M2.5 17 L13.5 5.5 L13.5 28.5 Z" fill="#B4572F"/><path d="M17 4.5 L17 19.5 L31 19.5 Z" fill="#4E8B45"/><path d="M18.5 23.5 L37 21.8 L37 24.8 L18.5 26.5 Z M18.5 28.5 L37 26.8 L37 29.8 L18.5 31.5 Z M18.5 33.5 L37 31.8 L37 34.8 L18.5 36.5 Z" fill="#A33A3A"/></svg><span class="t" style="left:313px;top:1484.3px;font-family:'Liberation Sans','Noto Sans CJK SC',sans-serif;font-size:30.7px;color:#DFE1E5;letter-spacing:0.070px;">FiveStageCPUForwardTest</span><svg class="a" style="left:714px;top:1484px;" width="28" height="28" viewBox="0 0 28 28" fill="none"><path d="M5.5 5.5 L22.5 22.5 M22.5 5.5 L5.5 22.5" stroke="#8A8D94" stroke-width="2.5" stroke-linecap="round"/></svg><svg class="a" style="left:3615px;top:1474px;" width="16" height="44" viewBox="0 0 16 44" fill="none"><circle cx="8" cy="8.3" r="3" fill="#6F737A"/><circle cx="8" cy="21" r="3" fill="#6F737A"/><circle cx="8" cy="33.6" r="3" fill="#6F737A"/></svg><svg class="a" style="left:3668px;top:1487px;" width="40" height="16" viewBox="0 0 40 16" fill="none"><path d="M4.5 8 L35.5 8" stroke="#6F737A" stroke-width="2.4" stroke-linecap="round"/></svg><svg class="a" style="left:141.5px;top:1667.5px;" width="24" height="16" viewBox="0 0 24 16" fill="none"><path d="M3 3.2 L12 12.2 L21 3.2" stroke="#A4A8B0" stroke-width="2.7" stroke-linecap="round" stroke-linejoin="round"/></svg><svg class="a" style="left:186px;top:1660px;" width="38" height="32" viewBox="0 0 38 32" fill="none"><path d="M5.5 17.5 L14 26 L31.5 6.5" stroke="#5FAD65" stroke-width="4.2" stroke-linecap="round" stroke-linejoin="round"/></svg><span class="t" style="left:233px;top:1663.8px;font-family:'Liberation Sans','Noto Sans CJK SC',sans-serif;font-size:28.6px;color:#DFE1E5;letter-spacing:1.940px;">测试结果</span><span class="t" style="left:790px;top:1664.5px;font-family:'Liberation Sans','Noto Sans CJK SC',sans-serif;font-size:27.6px;color:#DFE1E5;letter-spacing:0.227px;">35秒 419毫秒</span><svg class="a" style="left:1014px;top:1660px;" width="38" height="32" viewBox="0 0 38 32" fill="none"><path d="M5.5 17.5 L14 26 L31.5 6.5" stroke="#5FAD65" stroke-width="4.2" stroke-linecap="round" stroke-linejoin="round"/></svg><span class="t" style="left:1060.5px;top:1663.5px;font-family:'Liberation Sans','Noto Sans CJK SC',sans-serif;font-size:30px;color:#DFE1E5;letter-spacing:0.297px;">4 测试已通过</span><span class="t" style="left:1269px;top:1663.5px;font-family:'Liberation Sans','Noto Sans CJK SC',sans-serif;font-size:30px;color:#868A91;letter-spacing:0.523px;">总计 4 个测试，35秒 419毫秒</span><div class="cl" style="left:1032.3px;top:1724.3px;color:#868A91">C:\Users\26586\.jdks\temurin-17.0.16\bin\java.exe ...</div><div class="cl" style="left:1032.3px;top:1779.3px;color:#BCBEC4">Testing started at 18:06 ...</div><svg class="a" style="left:32.3px;top:2233px;" width="26" height="26" viewBox="0 0 26 26" fill="none"><rect x="3.4" y="3.6" width="17.6" height="17.6" rx="4.2" fill="#25324D" stroke="#548AF7" stroke-width="2.8"/></svg><span class="t" style="left:64px;top:2229px;font-family:'Liberation Sans','Noto Sans CJK SC',sans-serif;font-size:30.7px;color:#A8ADB5;letter-spacing:1.483px;">lab3</span><svg class="a" style="left:148.3px;top:2231px;" width="20" height="26" viewBox="0 0 20 26" fill="none"><path d="M4.5 3.5 L14 12.8 L4.5 22" stroke="#9DA0A8" stroke-width="2.6" stroke-linecap="round" stroke-linejoin="round"/></svg><span class="t" style="left:189px;top:2229px;font-family:'Liberation Sans','Noto Sans CJK SC',sans-serif;font-size:30.7px;color:#A8ADB5;letter-spacing:-0.931px;">src</span><svg class="a" style="left:247.5px;top:2231px;" width="20" height="26" viewBox="0 0 20 26" fill="none"><path d="M4.5 3.5 L14 12.8 L4.5 22" stroke="#9DA0A8" stroke-width="2.6" stroke-linecap="round" stroke-linejoin="round"/></svg><svg class="a" style="left:285.3px;top:2233px;" width="26" height="26" viewBox="0 0 26 26" fill="none"><rect x="3.4" y="3.6" width="17.6" height="17.6" rx="4.2" fill="#25324D" stroke="#548AF7" stroke-width="2.8"/></svg><span class="t" style="left:319.6px;top:2229px;font-family:'Liberation Sans','Noto Sans CJK SC',sans-serif;font-size:30.7px;color:#A8ADB5;letter-spacing:0.154px;">test</span><svg class="a" style="left:394px;top:2231px;" width="20" height="26" viewBox="0 0 20 26" fill="none"><path d="M4.5 3.5 L14 12.8 L4.5 22" stroke="#9DA0A8" stroke-width="2.6" stroke-linecap="round" stroke-linejoin="round"/></svg><span class="t" style="left:433.8px;top:2229px;font-family:'Liberation Sans','Noto Sans CJK SC',sans-serif;font-size:30.7px;color:#A8ADB5;letter-spacing:-0.943px;">scala</span><svg class="a" style="left:526px;top:2231px;" width="20" height="26" viewBox="0 0 20 26" fill="none"><path d="M4.5 3.5 L14 12.8 L4.5 22" stroke="#9DA0A8" stroke-width="2.6" stroke-linecap="round" stroke-linejoin="round"/></svg><span class="t" style="left:564.3px;top:2229px;font-family:'Liberation Sans','Noto Sans CJK SC',sans-serif;font-size:30.7px;color:#A8ADB5;letter-spacing:0.194px;">riscv</span><svg class="a" style="left:651px;top:2231px;" width="20" height="26" viewBox="0 0 20 26" fill="none"><path d="M4.5 3.5 L14 12.8 L4.5 22" stroke="#9DA0A8" stroke-width="2.6" stroke-linecap="round" stroke-linejoin="round"/></svg><svg class="a" style="left:690.5px;top:2223.5px;" width="44" height="44" viewBox="0 0 44 44" fill="none"><circle cx="20" cy="20" r="16.1" fill="#25324D" stroke="#548AF7" stroke-width="2.6"/><path d="M27.4 14.6 A8.1 8.1 0 1 0 27.4 25.4" stroke="#548AF7" stroke-width="2.6" fill="none"/><rect x="22.8" y="21.8" width="19.6" height="19.6" fill="#2B2D30"/><path d="M25.3 25.9 L39.8 24.2 M25.3 32.6 L39.8 30.9 M25.3 39.3 L39.8 37.6" stroke="#DB5C5C" stroke-width="2.5" stroke-linecap="round"/></svg><span class="t" style="left:739.5px;top:2229px;font-family:'Liberation Sans','Noto Sans CJK SC',sans-serif;font-size:30.7px;color:#A8ADB5;letter-spacing:-0.035px;">FiveStageCPUForwardTest.scala</span><span class="t" style="left:3256px;top:2229px;font-family:'Liberation Sans','Noto Sans CJK SC',sans-serif;font-size:30.7px;color:#A8ADB5;letter-spacing:-0.220px;">22:7</span><span class="t" style="left:3355.5px;top:2229px;font-family:'Liberation Sans','Noto Sans CJK SC',sans-serif;font-size:30.7px;color:#A8ADB5;letter-spacing:-5.567px;">LF</span><span class="t" style="left:3424.5px;top:2229px;font-family:'Liberation Sans','Noto Sans CJK SC',sans-serif;font-size:30.7px;color:#A8ADB5;letter-spacing:-0.093px;">UTF-8</span><span class="t" style="left:3599.5px;top:2229px;font-family:'Liberation Sans','Noto Sans CJK SC',sans-serif;font-size:30px;color:#A8ADB5;letter-spacing:0.370px;">2 个空格</span></section>
<section id="tool-icons"><div class="a" style="left:12.5px;top:115px;width:75px;height:75px;background:#4B4D51;border-radius:15px;"></div><svg class="a" style="left:25px;top:130px;" width="50" height="46" viewBox="0 0 50 46" fill="none"><path d="M4.3 9 Q4.3 5.8 7.5 5.8 L17.5 5.8 Q19 5.8 20 6.8 L26.5 13.3 L42.5 13.3 Q45.7 13.3 45.7 16.5 L45.7 36.5 Q45.7 39.7 42.5 39.7 L7.5 39.7 Q4.3 39.7 4.3 36.5 Z" stroke="#CED0D6" stroke-width="3.7" stroke-linecap="round" stroke-linejoin="round" /></svg><svg class="a" style="left:22px;top:238px;" width="56" height="30" viewBox="0 0 56 30" fill="none"><path d="M5 15 L19.5 15 M36.5 15 L51 15" stroke="#CED0D6" stroke-width="3.6" stroke-linecap="round" stroke-linejoin="round" /><circle cx="28" cy="15" r="8.3" stroke="#CED0D6" stroke-width="3.7"/></svg><svg class="a" style="left:25px;top:328px;" width="50" height="50" viewBox="0 0 50 50" fill="none"><circle cx="11.5" cy="12.8" r="5.8" stroke="#CED0D6" stroke-width="3.6"/><circle cx="11.5" cy="37.7" r="5.8" stroke="#CED0D6" stroke-width="3.6"/><circle cx="38.2" cy="37.7" r="5.8" stroke="#CED0D6" stroke-width="3.6"/><path d="M11.5 18.8 L11.5 31.7 M38.2 31.7 L38.2 19.5 Q38.2 12.8 31.5 12.8 L25 12.8 M30.5 5.8 L23.5 12.8 L30.5 19.8" stroke="#CED0D6" stroke-width="3.6" stroke-linecap="round" stroke-linejoin="round" /></svg><div class="a" style="left:20px;top:415px;width:60px;height:2px;background:#43454A;"></div><svg class="a" style="left:25px;top:453px;" width="50" height="54" viewBox="0 0 50 54" fill="none"><path d="M7 5.5 L7 49.5 M7 13.6 L16 13.6 M7 39.5 L16 39.5" stroke="#CED0D6" stroke-width="3.6" stroke-linecap="round" stroke-linejoin="round" /><rect x="16.5" y="5.7" width="27.5" height="16" rx="3.5" stroke="#CED0D6" stroke-width="3.6"/><rect x="16.5" y="30.8" width="27.5" height="17.5" rx="3.5" stroke="#CED0D6" stroke-width="3.6"/></svg><svg class="a" style="left:25px;top:570px;" width="50" height="20" viewBox="0 0 50 20" fill="none"><circle cx="8.399999999999999" cy="10" r="3.8" fill="#CED0D6"/><circle cx="24.9" cy="10" r="3.8" fill="#CED0D6"/><circle cx="41.3" cy="10" r="3.8" fill="#CED0D6"/></svg><div class="a" style="left:12.5px;top:1420px;width:75px;height:75px;background:#4B4D51;border-radius:15px;"></div><svg class="a" style="left:25px;top:1432px;" width="50" height="50" viewBox="0 0 50 50" fill="none"><path d="M9.5 8.6 Q9.5 6 12 7.2 L40.5 23 Q43 25 40.5 27 L12 42.8 Q9.5 44 9.5 41.4 Z" stroke="#CED0D6" stroke-width="3.7" stroke-linecap="round" stroke-linejoin="round" /></svg><svg class="a" style="left:25px;top:1532px;" width="50" height="52" viewBox="0 0 50 52" fill="none"><path d="M4.8 7.5 Q4.8 5.6 6.8 5.6 L12 5.6 Q15 7.4 18 5.6 L30 5.6 Q41.5 5.6 46.3 16.6 Q41 12.8 34.5 14.5 Q31 15.5 30.5 17.3 L15 17.3 Q12 15.4 9.5 16.3 L6.8 16.3 Q4.8 16.3 4.8 14.3 Z" stroke="#CED0D6" stroke-width="3.7" stroke-linecap="round" stroke-linejoin="round" /><path d="M19.6 18 L17.9 26 L17.9 46.4 Q17.9 48.2 19.7 48.2 L28.3 48.2 Q30.1 48.2 30.1 46.4 L30.1 26 L28.4 18" stroke="#CED0D6" stroke-width="3.7" stroke-linecap="round" stroke-linejoin="round" /></svg><svg class="a" style="left:25px;top:1634px;" width="54" height="54" viewBox="0 0 54 54" fill="none"><path d="M20.5 42 L8 42 Q4.5 42 4.5 38.5 L4.5 9.5 Q4.5 6 8 6 L42 6 Q45.5 6 45.5 9.5 L45.5 21 M4.5 16.2 L45.5 16.2" stroke="#CED0D6" stroke-width="3.7" stroke-linecap="round" stroke-linejoin="round" /><path d="M47.7 33.9 L44.5 43.6 L34.5 45.7 L27.7 38.1 L30.9 28.4 L40.9 26.3 Z" stroke="#CED0D6" stroke-width="3.7" stroke-linecap="round" stroke-linejoin="round" /></svg><svg class="a" style="left:25px;top:1733px;" width="50" height="50" viewBox="0 0 50 50" fill="none"><path d="M27.8 21.2 L8.6 40.4 Q6.6 42.6 8.7 44.7 Q10.8 46.6 12.9 44.6 L32 25.6" stroke="#CED0D6" stroke-width="3.6" stroke-linecap="round" stroke-linejoin="round" /><path d="M39.5 6.2 A10.3 10.3 0 1 0 45.2 13.5 L38.8 19.5 L33.8 18.2 L32.8 13 Z" stroke="#CED0D6" stroke-width="3.6" stroke-linecap="round" stroke-linejoin="round" /><path d="M7.5 8.2 L9.8 6.4 L18.5 12.5 L22.5 19.5 L20.5 21.6 L13.5 17.8 Z M21.5 20.5 L24.5 23.5" stroke="#CED0D6" stroke-width="3.3" stroke-linecap="round" stroke-linejoin="round" /><path d="M31.5 32.5 L40.8 42 Q42.8 44.2 40.8 46 Q38.8 47.6 36.8 45.8 L27.5 36.4" stroke="#CED0D6" stroke-width="3.6" stroke-linecap="round" stroke-linejoin="round" /></svg><svg class="a" style="left:22px;top:1833px;" width="56" height="50" viewBox="0 0 56 50" fill="none"><path d="M5 25 L15.5 6 L39.5 6 L50 25 L39.5 44 L15.5 44 Z" stroke="#CED0D6" stroke-width="3.7" stroke-linecap="round" stroke-linejoin="round" /><path d="M21.5 15.5 L37 25 L21.5 34.5 Z" stroke="#CED0D6" stroke-width="3.6" stroke-linecap="round" stroke-linejoin="round" /></svg><svg class="a" style="left:25px;top:1935px;" width="50" height="46" viewBox="0 0 50 46" fill="none"><rect x="3.7" y="4.6" width="42.6" height="36.6" rx="4.5" stroke="#CED0D6" stroke-width="3.7"/><path d="M12.5 14.5 L20.5 20.5 L12.5 26.5 M23.5 29.8 L35.5 29.8" stroke="#CED0D6" stroke-width="3.6" stroke-linecap="round" stroke-linejoin="round" /></svg><svg class="a" style="left:25px;top:2033px;" width="50" height="50" viewBox="0 0 50 50" fill="none"><circle cx="25" cy="25" r="21" stroke="#CED0D6" stroke-width="3.7"/><path d="M25 13.5 L25 27" stroke="#CED0D6" stroke-width="3.6" stroke-linecap="round" stroke-linejoin="round" /><circle cx="25" cy="34.8" r="2.5" fill="#CED0D6"/></svg><svg class="a" style="left:25px;top:2130px;" width="50" height="56" viewBox="0 0 50 56" fill="none"><circle cx="13.5" cy="13" r="6.6" stroke="#CED0D6" stroke-width="3.6"/><circle cx="35.5" cy="18.5" r="6.2" stroke="#CED0D6" stroke-width="3.6"/><path d="M13.5 19.8 L13.5 49.5 M13.5 38.5 L24 38.5 Q35.5 38.5 35.5 27 L35.5 25" stroke="#CED0D6" stroke-width="3.6" stroke-linecap="round" stroke-linejoin="round" /></svg><svg class="a" style="left:3765px;top:126px;" width="56" height="56" viewBox="0 0 56 56" fill="none"><path d="M28 6.3 Q16.6 6.3 16.6 19 L16.6 28 L9.2 38.8 Q8.6 40.7 10.6 40.7 L45.4 40.7 Q47.4 40.7 46.8 38.8 L39.4 28 L39.4 19" stroke="#CED0D6" stroke-width="3.6" stroke-linecap="round" stroke-linejoin="round" /><path d="M22 44.6 L34 44.6 Q28 52 22 44.6 Z" fill="#CED0D6"/><circle cx="43.7" cy="10" r="8.8" fill="#DB5C5C"/></svg><svg class="a" style="left:3765px;top:229px;" width="58" height="54" viewBox="0 0 58 54" fill="none"><path d="M11.3 8.0 C12.8 7.5 17.1 5.5 20.0 4.9 C22.9 4.3 25.7 3.9 28.9 4.5 C32.1 5.2 36.1 6.6 39.0 8.8 C41.9 11.0 45.2 16.3 46.5 17.8 " stroke="#CED0D6" stroke-width="3.6" stroke-linecap="round" stroke-linejoin="round" /><path d="M24.0 42.3 C22.2 41.3 15.5 39.3 13.0 36.5 C10.5 33.7 8.7 28.9 8.9 25.6 C9.1 22.4 11.3 18.9 14.0 17.0 C16.7 15.1 22.0 14.2 25.0 14.0 C28.0 13.8 30.1 14.6 32.0 15.6 C34.0 16.6 35.9 19.1 36.7 19.8 " stroke="#CED0D6" stroke-width="3.6" stroke-linecap="round" stroke-linejoin="round" /><path d="M23.4 32.5 C22.8 32.0 20.5 30.6 19.9 29.5 C19.3 28.4 19.3 26.9 19.7 25.6 C20.1 24.4 21.2 22.8 22.4 22.0 C23.6 21.2 26.1 21.0 26.9 20.8 " stroke="#CED0D6" stroke-width="3.6" stroke-linecap="round" stroke-linejoin="round" /><path d="M29.7 29.2 Q29.7 26.5 32.4 26.5 L48.2 26.5 Q50.9 26.5 50.9 29.2 L50.9 46.2 L44 41.4 L32.4 41.4 Q29.7 41.4 29.7 38.7 Z" stroke="#CED0D6" stroke-width="3.6" stroke-linejoin="round" fill="#2B2D30"/></svg><svg class="a" style="left:3767px;top:327px;" width="52" height="52" viewBox="0 0 52 52" fill="none"><ellipse cx="26" cy="12" rx="18.5" ry="7" stroke="#CED0D6" stroke-width="3.6"/><path d="M7.5 12 L7.5 40 Q7.5 47 26 47 Q44.5 47 44.5 40 L44.5 12 M7.5 21.5 Q7.5 28.5 26 28.5 Q44.5 28.5 44.5 21.5 M7.5 31 Q7.5 38 26 38 Q44.5 38 44.5 31" stroke="#CED0D6" stroke-width="3.6" stroke-linecap="round" stroke-linejoin="round" /></svg><svg class="a" style="left:3766.5px;top:428px;" width="60" height="48" viewBox="0 0 60 48" fill="none"><path d="M30.5 40.5 L11 40.5 Q6.2 40.5 6.2 35.7 L6.2 12 Q6.2 7.2 11 7.2 L42.8 7.2 Q47.6 7.2 47.6 12 L47.6 26.5" stroke="#CED0D6" stroke-width="4.4" stroke-linecap="round" stroke-linejoin="round" /><path d="M14.5 15.2 L30.5 15.2 M37 15.2 L41 15.2 M14.5 21.6 L25.5 21.6 M32 21.6 L41 21.6 M14.5 28 L20.5 28 M27 28 L41 28 M14.5 34.2 L27.5 34.2" stroke="#CED0D6" stroke-width="3.0" stroke-linecap="round" stroke-linejoin="round" /><path d="M40.5 32.8 L36 37.4 L40.5 42 M47 32.8 L51.5 37.4 L47 42" stroke="#CED0D6" stroke-width="4.2" stroke-linecap="round" stroke-linejoin="round" /></svg><svg class="a" style="left:3765px;top:529px;" width="58" height="50" viewBox="0 0 58 50" fill="none"><path d="M13.5 21 Q4.4 24.5 4.4 30.5 L4.4 33.5 Q14 44.2 28.2 44.2 Q42.4 44.2 51.9 33.5 L51.9 30.5 Q51.9 24.5 43 21 Z" fill="#CED0D6"/><path d="M12.8 22 L44.5 22 L44.5 33.5 Q37 38.6 28.6 38.6 Q20.2 38.6 12.8 33.5 Z" fill="#2B2D30"/><rect x="11.2" y="5.7" width="16.7" height="17" rx="7.2" stroke="#CED0D6" stroke-width="3.8" fill="#2B2D30"/><rect x="27.9" y="5.7" width="16.7" height="17" rx="7.2" stroke="#CED0D6" stroke-width="3.8" fill="#2B2D30"/><rect x="20.7" y="27.4" width="4.4" height="9" rx="2.2" fill="#CED0D6"/><rect x="30.9" y="27.4" width="4.4" height="9" rx="2.2" fill="#CED0D6"/></svg><svg class="a" style="left:3767px;top:628px;" width="52" height="50" viewBox="0 0 52 50" fill="none"><path d="M30.0 8.2 L43.0 20.6 L38.8 36.9 L21.5 41.7 L8.7 28.9 L13.0 12.4 Z" stroke="#CED0D6" stroke-width="3.7" stroke-linecap="round" stroke-linejoin="round" /></svg><svg class="a" style="left:133px;top:1568px;" width="46" height="46" viewBox="0 0 46 46" fill="none"><g transform="translate(20,22)"><path d="M15 -5 A14.6 14.6 0 1 0 0 14.6" stroke="#CED0D6" stroke-width="3" stroke-linecap="round" stroke-linejoin="round" /><path d="M3.5 -5 L15 -5 L15 -16.5" stroke="#CED0D6" stroke-width="3" stroke-linecap="round" stroke-linejoin="round" /></g><path d="M23.6 23 L39.4 32 L23.6 41 Z" fill="#253627" stroke="#57965C" stroke-width="3" stroke-linejoin="round"/></svg><svg class="a" style="left:198px;top:1568px;" width="46" height="46" viewBox="0 0 46 46" fill="none"><g transform="translate(20,22)"><path d="M15 -5 A14.6 14.6 0 1 0 0 14.6" stroke="#5C5D61" stroke-width="3" stroke-linecap="round" stroke-linejoin="round" /><path d="M3.5 -5 L15 -5 L15 -16.5" stroke="#5C5D61" stroke-width="3" stroke-linecap="round" stroke-linejoin="round" /></g><circle cx="31" cy="31" r="9" fill="#5C5D61"/></svg><svg class="a" style="left:262px;top:1568px;" width="46" height="46" viewBox="0 0 46 46" fill="none"><path d="M18 4 Q5 10 7.5 24 L11.5 31.5 M2.5 28 L11.5 32 L15 23" stroke="#CED0D6" stroke-width="3" stroke-linecap="round" stroke-linejoin="round" /><path d="M26.5 4.5 Q32 8 34 17 M24 3.5 L32.5 3.5 M24 3.5 L24 12" stroke="#CED0D6" stroke-width="3" stroke-linecap="round" stroke-linejoin="round" /><path d="M25 23 L40.8 32 L25 41 Z" fill="#253627" stroke="#57965C" stroke-width="3" stroke-linejoin="round"/></svg><div class="a" style="left:333px;top:1575px;width:30px;height:30px;background:#5A5B5D;border-radius:4.5px;"></div><div class="a" style="left:388px;top:1565px;width:2.8px;height:50px;background:#43454A;"></div><svg class="a" style="left:408px;top:1572px;" width="44" height="36" viewBox="0 0 44 36" fill="none"><path d="M7 18 L17 28.4 L37 8" stroke="#CED0D6" stroke-width="3.6" stroke-linecap="round" stroke-linejoin="round" /></svg><div class="a" style="left:467.5px;top:1562.5px;width:55px;height:55px;background:#47494E;border-radius:10px;"></div><svg class="a" style="left:475px;top:1570px;" width="40" height="40" viewBox="0 0 40 40" fill="none"><circle cx="20" cy="20" r="16" stroke="#CED0D6" stroke-width="3"/><path d="M8.8 31.2 L31.2 8.8" stroke="#CED0D6" stroke-width="3" stroke-linecap="round" stroke-linejoin="round" /></svg><div class="a" style="left:535px;top:1565px;width:2.8px;height:50px;background:#43454A;"></div><svg class="a" style="left:556px;top:1572px;" width="48" height="44" viewBox="0 0 48 44" fill="none"><path d="M13.4 6.5 L13.4 30 M5 21.5 L13.4 30 L21.8 21.5" stroke="#CED0D6" stroke-width="3" stroke-linecap="round" stroke-linejoin="round" /><path d="M21 7 L39 7 M25.5 18 L39 18 M30.5 29.4 L39 29.4" stroke="#CED0D6" stroke-width="3" stroke-linecap="round" stroke-linejoin="round" /><path d="M44 31 L44 41 L34 41 Z" fill="#CED0D6"/></svg><svg class="a" style="left:620px;top:1568px;" width="46" height="44" viewBox="0 0 46 44" fill="none"><path d="M9 13 L9 31.5 Q9 36 13.5 36 L32 36" stroke="#CED0D6" stroke-width="3" stroke-linecap="round" stroke-linejoin="round" /><path d="M37.4 8 L21 24 M21 12 L21 24 L32.4 24" stroke="#CED0D6" stroke-width="3" stroke-linecap="round" stroke-linejoin="round" /></svg><svg class="a" style="left:686px;top:1568px;" width="48" height="48" viewBox="0 0 48 48" fill="none"><circle cx="22" cy="22" r="16" stroke="#CED0D6" stroke-width="3"/><path d="M22 14 L22 22 L29 26" stroke="#CED0D6" stroke-width="3" stroke-linecap="round" stroke-linejoin="round" /><path d="M44 35 L44 45 L34 45 Z" fill="#CED0D6"/></svg><div class="a" style="left:748px;top:1565px;width:2.8px;height:50px;background:#43454A;"></div><svg class="a" style="left:768px;top:1570px;" width="44" height="40" viewBox="0 0 44 40" fill="none"><path d="M5 14 Q5 10.5 8.5 10.5 L12.5 10.5 L15 6 L29 6 L31.5 10.5 L35.5 10.5 Q39 10.5 39 14 L39 30.5 Q39 34 35.5 34 L8.5 34 Q5 34 5 30.5 Z" stroke="#5C5D61" stroke-width="3" stroke-linecap="round" stroke-linejoin="round" /><circle cx="21.6" cy="22" r="5.8" stroke="#5C5D61" stroke-width="3"/><circle cx="33" cy="16" r="1.5" fill="#5C5D61"/></svg><svg class="a" style="left:836px;top:1568px;" width="44" height="46" viewBox="0 0 44 46" fill="none"><path d="M9.6 14 L9.6 9.5 Q9.6 5.5 13.6 5.5 L31.6 5.5 Q35.6 5.5 35.6 9.5 L35.6 34.5 Q35.6 38.5 31.6 38.5 L13.6 38.5 Q9.6 38.5 9.6 34.5 L9.6 30" stroke="#5C5D61" stroke-width="3" stroke-linecap="round" stroke-linejoin="round" /><path d="M4 22 L26.5 22 M19.5 15 L26.5 22 L19.5 29" stroke="#5C5D61" stroke-width="3" stroke-linecap="round" stroke-linejoin="round" /></svg><svg class="a" style="left:898px;top:1570px;" width="50" height="46" viewBox="0 0 50 46" fill="none"><path d="M8 34.4 Q3.6 31 3.6 24.5 Q3.6 7 22 7 Q40.4 7 40.4 24.5 Q40.4 31 36 34.4 Z" stroke="#5C5D61" stroke-width="3" stroke-linecap="round" stroke-linejoin="round" /><path d="M24.3 22 L32 16.4" stroke="#5C5D61" stroke-width="3" stroke-linecap="round" stroke-linejoin="round" /><circle cx="22" cy="24.4" r="3.2" stroke="#5C5D61" stroke-width="2.6"/><path d="M46 33 L46 43 L36 43 Z" fill="#5C5D61"/></svg><svg class="a" style="left:977px;top:1568px;" width="16" height="44" viewBox="0 0 16 44" fill="none"><circle cx="8" cy="9.4" r="3.2" fill="#CED0D6"/><circle cx="8" cy="22" r="3.2" fill="#CED0D6"/><circle cx="8" cy="34.4" r="3.2" fill="#CED0D6"/></svg><svg class="a" style="left:3675px;top:1745px;" width="36" height="40" viewBox="0 0 36 40" fill="none"><path d="M18 6.5 L18 35 M7.3 17.3 L18 6.6 L28.7 17.3" stroke="#5C5D61" stroke-width="2.8" stroke-linecap="round" stroke-linejoin="round" /></svg><svg class="a" style="left:3675px;top:1810px;" width="36" height="40" viewBox="0 0 36 40" fill="none"><path d="M18 5.5 L18 34 M7.3 23.2 L18 33.9 L28.7 23.2" stroke="#5C5D61" stroke-width="2.8" stroke-linecap="round" stroke-linejoin="round" /></svg><svg class="a" style="left:3671px;top:1876px;" width="44" height="40" viewBox="0 0 44 40" fill="none"><path d="M5 7.6 L39 7.6 M5 19 L32 19 Q38.5 19 38.5 24.7 Q38.5 30.5 32 30.5 L25 30.5 M29.5 25 L24 30.5 L29.5 36 M5 30.5 L16.5 30.5" stroke="#CED0D6" stroke-width="2.8" stroke-linecap="round" stroke-linejoin="round" /></svg><svg class="a" style="left:3671px;top:1940px;" width="44" height="38" viewBox="0 0 44 38" fill="none"><path d="M5 7.8 L16.5 7.8 M5 19.6 L16.5 19.6 M5 31.2 L39 31.2 M30.2 5.6 L30.2 24.5 M22 17 L30.2 25 L38.4 17" stroke="#CED0D6" stroke-width="2.8" stroke-linecap="round" stroke-linejoin="round" /></svg><svg class="a" style="left:3671px;top:2004px;" width="44" height="40" viewBox="0 0 44 40" fill="none"><path d="M13.5 16 L13.5 7 L30.5 7 L30.5 16 M11 32.5 L8 32.5 Q5 32.5 5 29.5 L5 19 Q5 16 8 16 L36 16 Q39 16 39 19 L39 29.5 Q39 32.5 36 32.5 L33 32.5 M13.5 24.6 L30.5 24.6 L30.5 34.6 L13.5 34.6 Z" stroke="#CED0D6" stroke-width="2.8" stroke-linecap="round" stroke-linejoin="round" /><circle cx="33.5" cy="21" r="1.5" fill="#CED0D6"/></svg><svg class="a" style="left:3673px;top:2066px;" width="40" height="46" viewBox="0 0 40 46" fill="none"><path d="M5.3 14 L34.7 14 M13.5 13.5 Q13.5 7 20 7 Q26.5 7 26.5 13.5 M8.2 14.5 L8.2 37 Q8.2 40.5 11.7 40.5 L28.3 40.5 Q31.8 40.5 31.8 37 L31.8 14.5 M16.6 21 L16.6 33.8 M23.6 21 L23.6 33.8" stroke="#CED0D6" stroke-width="2.8" stroke-linecap="round" stroke-linejoin="round" /></svg><svg class="a" style="left:3014px;top:2224px;" width="44" height="42" viewBox="0 0 44 42" fill="none"><rect x="8.5" y="6" width="11.5" height="11" rx="4.8" stroke="#CED0D6" stroke-width="2.8"/><rect x="22" y="6" width="11.5" height="11" rx="4.8" stroke="#CED0D6" stroke-width="2.8"/><path d="M8 15 Q4.5 18.5 4.5 24 L4.5 27 Q9 32 16 34 L16 20 Q11 19 8 15 Z" fill="#CED0D6"/><circle cx="27.8" cy="28.3" r="10" fill="#2FA84F"/><path d="M23.2 28.5 L26.6 31.8 L32.6 25" stroke="#FFFFFF" stroke-width="2.6" stroke-linecap="round" stroke-linejoin="round" /></svg><svg class="a" style="left:3094px;top:2226px;" width="42" height="38" viewBox="0 0 42 38" fill="none"><rect x="4" y="4" width="34" height="30" fill="#253627"/><path d="M9.5 4.5 L4 4.5 L4 33.5 L9.5 33.5 M32.5 4.5 L38 4.5 L38 33.5 L32.5 33.5" stroke="#57965C" stroke-width="2.8" stroke-linecap="round" stroke-linejoin="round" /></svg><span class="t" style="left:3106.5px;top:2231.3px;font-family:'Liberation Sans','Noto Sans CJK SC',sans-serif;font-size:30px;color:#DFE1E5;">T</span><svg class="a" style="left:3174px;top:2225px;" width="42" height="42" viewBox="0 0 42 42" fill="none"><circle cx="21" cy="20.5" r="16.3" stroke="#CED0D6" stroke-width="2.8"/><circle cx="20.5" cy="21" r="3" stroke="#CED0D6" stroke-width="2.4"/><path d="M22.8 18.7 L29 12.5" stroke="#CED0D6" stroke-width="2.6" stroke-linecap="round" stroke-linejoin="round" /></svg><svg class="a" style="left:3553px;top:2224px;" width="42" height="44" viewBox="0 0 42 44" fill="none"><path d="M14 36.8 L9 36.8 Q5.5 36.8 5.5 33.3 L5.5 13.5 L13.5 5.5 L25.5 5.5 Q29 5.5 29 9 L29 17 M5.8 14 L11 14 Q14 14 14 11 L14 5.8" stroke="#CED0D6" stroke-width="2.8" stroke-linecap="round" stroke-linejoin="round" /><circle cx="27.5" cy="31" r="3" stroke="#CED0D6" stroke-width="2.4"/><path d="M27.5 22.5 L30.2 24.3 L33.4 23.7 L34.4 26.8 L37 28.8 L35.7 31.8 L36.5 35 L33.5 36.3 L31.8 39.1 L28.6 38.3 L25.5 39.5 L23.5 37 L20.4 36 L20.6 32.8 L18.8 30 L21 27.6 L21.4 24.4 L24.6 24.1 Z" stroke="#CED0D6" stroke-width="2.4" stroke-linecap="round" stroke-linejoin="round" /></svg><svg class="a" style="left:3762px;top:2226px;" width="40" height="40" viewBox="0 0 40 40" fill="none"><rect x="5.5" y="16.2" width="24" height="18" rx="4" stroke="#CED0D6" stroke-width="2.8"/><path d="M17.5 22.5 L17.5 28" stroke="#CED0D6" stroke-width="2.8" stroke-linecap="round" stroke-linejoin="round" /><path d="M22.5 15.5 L22.5 11.5 Q22.5 5.5 28.8 5.5 Q35 5.5 35 11.5 L35 13.5" stroke="#CED0D6" stroke-width="2.8" stroke-linecap="round" stroke-linejoin="round" /></svg></section>
</main>
</body></html>
